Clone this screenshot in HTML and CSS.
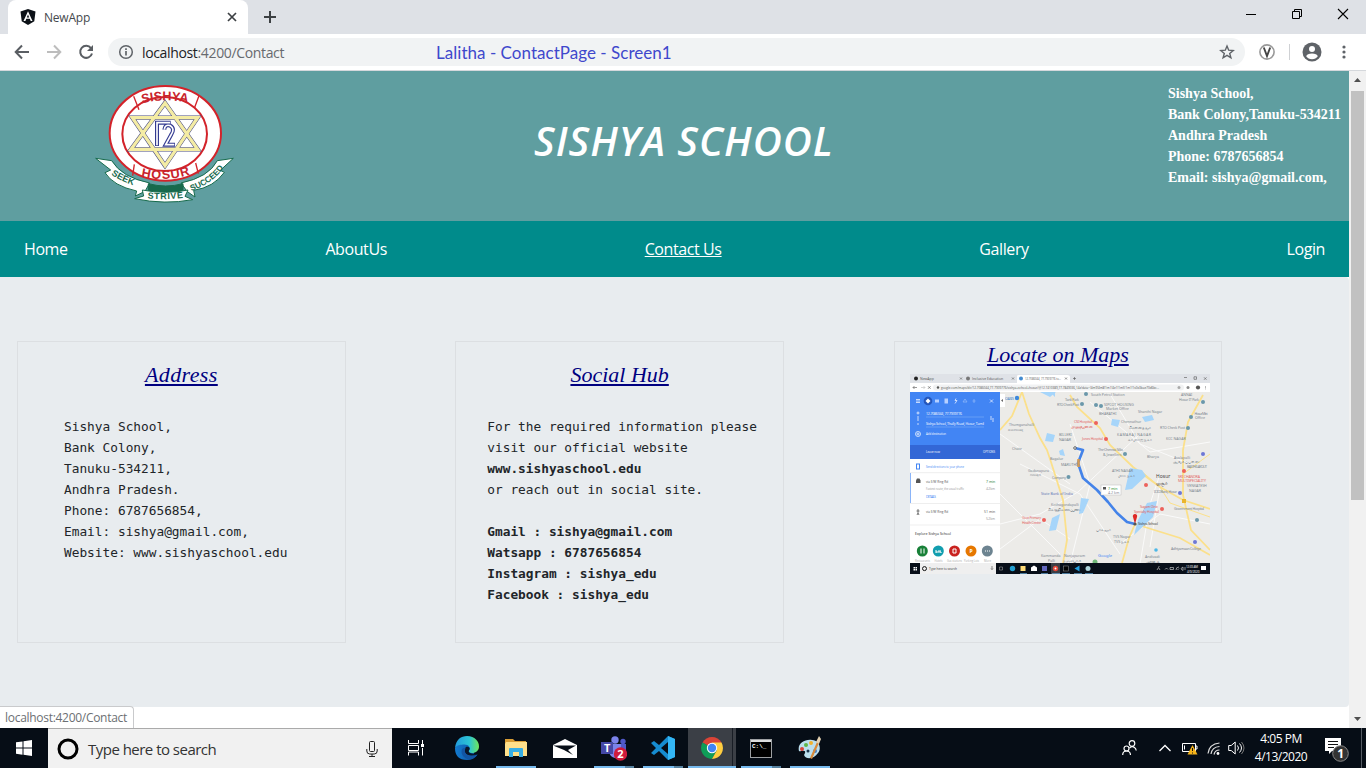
FILE: index.html
```html
<!DOCTYPE html>
<html lang="en">
<head>
<meta charset="utf-8">
<title>NewApp</title>
<link rel="stylesheet" href="styles.css">
</head>
<body>
<div class="screen">
  <div class="tabstrip">
    <div class="tab">
      <svg class="favicon" width="16" height="16" viewBox="0 0 16 16"><path d="M8 0l7.500 2.600-1.200 9.600L8 16l-6.300-3.800L.5 2.600z" fill="#0c1117"/><path d="M8 2.200L3.500 12h1.900l.9-2.200h3.500l.9 2.200h1.800zM8 5.600l1.200 2.800H6.800z" fill="#fff" fill-rule="evenodd"/></svg>
      <span class="tab-title">NewApp</span>
      <svg width="10" height="10" viewBox="0 0 10 10"><path d="M1 1l8 8M9 1L1 9" stroke="#3c4043" stroke-width="1.700"/></svg>
    </div>
    <svg class="plus" width="12" height="12" viewBox="0 0 12 12"><path d="M6 0v12M0 6h12" stroke="#3c4043" stroke-width="2"/></svg>
    <div class="window-buttons">
      <svg width="12" height="12" viewBox="0 0 12 12"><path d="M1 6.500h10" stroke="#000"/></svg>
      <svg width="12" height="12" viewBox="0 0 12 12"><path d="M1.500 3.500h7v7h-7zM3.500 3.500v-2h7v7h-2" fill="none" stroke="#000"/></svg>
      <svg width="12" height="12" viewBox="0 0 12 12"><path d="M1 1l10 10M11 1L1 11" stroke="#000" stroke-width="1.100"/></svg>
    </div>
  </div>
  <div class="toolbar">
    <div class="nav-buttons">
      <svg width="16" height="16" viewBox="0 0 16 16"><path d="M15 8H2M8 1.500L1.700 8 8 14.500" fill="none" stroke="#5a5e63" stroke-width="2"/></svg>
      <svg width="16" height="16" viewBox="0 0 16 16"><path d="M1 8h13M8 1.500L14.300 8 8 14.500" fill="none" stroke="#bdbdbd" stroke-width="2"/></svg>
      <svg width="16" height="16" viewBox="0 0 16 16"><path d="M13 4.200A6 6 0 1 0 14 9.500" fill="none" stroke="#5a5e63" stroke-width="2"/><path d="M15 1v6H9z" fill="#5a5e63"/></svg>
    </div>
    <div class="omnibox">
      <svg width="16" height="16" viewBox="0 0 16 16"><circle cx="8" cy="8" r="6.300" fill="none" stroke="#5f6368" stroke-width="1.500"/><path d="M8 7v4.500M8 4.200v1.700" stroke="#5f6368" stroke-width="1.700"/></svg>
      <span class="url"><span class="host">localhost</span>:4200/Contact</span>
      <span class="note">Lalitha - ContactPage - Screen1</span>
      <svg class="star" width="16" height="16" viewBox="0 0 16 16"><path d="M8 2l1.700 4.200 4.500.3-3.500 2.900 1.200 4.400L8 11.300l-3.900 2.500 1.200-4.400-3.500-2.900 4.500-.3z" fill="none" stroke="#5f6368" stroke-width="1.400"/></svg>
    </div>
    <div class="extensions">
      <svg width="16" height="16" viewBox="0 0 16 16"><circle cx="8" cy="8" r="7.100" fill="#fff" stroke="#999" stroke-width="1.600"/><path d="M4.800 3.500L8 12l3.200-8.500" fill="none" stroke="#444" stroke-width="1.900"/></svg>
      <span class="divider"></span>
      <svg width="20" height="20" viewBox="0 0 20 20"><circle cx="10" cy="10" r="9.500" fill="#5f6368"/><circle cx="10" cy="7" r="3" fill="#fff"/><path d="M4.200 14.200q1-2.700 5.800-2.700t5.800 2.700q-2 3-5.800 3t-5.800-3" fill="#fff"/></svg>
      <svg width="4" height="14" viewBox="0 0 4 14"><g fill="#5f6368"><circle cx="2" cy="2" r="1.600"/><circle cx="2" cy="7" r="1.600"/><circle cx="2" cy="12" r="1.600"/></g></svg>
    </div>
  </div>

  <div class="viewport">
    <div class="page">
      <header class="banner">
        <svg class="crest" width="160" height="135" viewBox="0 0 480 405">
          <defs>
            <path id="arc-top" d="M134 97Q240 56 346 95"/>
            <path id="arc-bottom" d="M134 294Q241 334 352 285"/>
            <path id="arc-left" d="M64 286Q95 316 162 337"/>
            <path id="arc-mid" d="M166 368Q238 378 318 365"/>
            <path id="arc-right" d="M312 350Q384 328 420 272"/>
          </defs>
          <ellipse cx="241" cy="175" rx="167" ry="142" fill="#fff" stroke="#d3232a" stroke-width="6"/>
          <ellipse cx="239" cy="177" rx="127" ry="111" fill="#fff" stroke="#d3232a" stroke-width="6"/>
          <path d="M146 64l16 40M342 62l-14 38M148 268l-5 34M332 264l8 32" stroke="#d3232a" stroke-width="4"/>
          <g fill="none" stroke-linejoin="miter">
            <path d="M240 84L338 223H138zM240 272L142 128H338z" stroke="#44477f" stroke-width="13"/>
            <path d="M240 84L338 223H138zM240 272L142 128H338z" stroke="#f4eca4" stroke-width="10"/>
          </g>
          <path d="M216 213V143H257M238 164q1-17 18-12 15 9 2 28l-16 29h28" fill="none" stroke="#343b91" stroke-width="12"/>
          <path d="M216 211V143H255M238 164q1-17 18-12 15 9 2 28l-16 29h26" fill="none" stroke="#fff" stroke-width="5"/>
          <g class="crest-red" text-anchor="middle">
            <text font-size="38"><textPath href="#arc-top" startOffset="50%">SISHYA</textPath></text>
            <text font-size="38" letter-spacing="3"><textPath href="#arc-bottom" startOffset="50%">HOSUR</textPath></text>
          </g>
          <g fill="#fff" stroke="#176b4c" stroke-width="3">
            <path d="M32 250l48 7q30 50 114 67l-14 25-29 14 4-15q-70-15-95-55l17-8z"/>
            <path d="M445 250l-48 7q-26 50-109 67l18 25 24 17-4-20q60-9 92-54l-12-6z"/>
            <path d="M190 326q52 14 104 0v22q-52 14-104 0z" fill="#17694c"/>
            <path d="M172 345q70 14 137 0l-9 19 23 10q-84 16-174-3l27-8z"/>
          </g>
          <g class="crest-green" font-size="27" text-anchor="middle">
            <text><textPath href="#arc-left" startOffset="50%">SEEK</textPath></text>
            <text letter-spacing="2"><textPath href="#arc-mid" startOffset="50%">STRIVE</textPath></text>
            <text font-size="25"><textPath href="#arc-right" startOffset="50%">SUCCEED</textPath></text>
          </g>
        </svg>
        <h1 class="school-name">SISHYA SCHOOL</h1>
        <address class="contact">Sishya School,<br><span class="bank">Bank Colony,Tanuku-534211</span><br>Andhra Pradesh<br>Phone: 6787656854<br>Email: sishya@gmail.com,</address>
      </header>
      <nav class="menu"><a>Home</a><a>AboutUs</a><a class="current">Contact Us</a><a>Gallery</a><a>Login</a></nav>
      <main class="content">
        <section class="card">
          <h2 class="wide">Address</h2>
          <pre class="address">Sishya School,
Bank Colony,
Tanuku-534211,
Andhra Pradesh.
Phone: 6787656854,
Email: sishya@gmail.com,
Website: www.sishyaschool.edu</pre>
        </section>
        <section class="card">
          <h2>Social Hub</h2>
          <pre class="social">For the required information please
visit our official website
<b>www.sishyaschool.edu</b>
or reach out in social site.

<b>Gmail : sishya@gmail.com
Watsapp : 6787656854
Instagram : sishya_edu
Facebook : sishya_edu</b></pre>
        </section>
        <section class="card card-map">
          <h2>Locate on Maps</h2>
          <svg class="map" width="300" height="200" viewBox="0 0 300 200">
            <rect width="300" height="200" fill="#ecebe8"/>
            <g fill="none" stroke="#fafafa" stroke-width="1">
              <path d="M90 150L130 140 168 118 230 60M90 120l60 60M110 90l60 30 40 60M160 190l20-80-20-60M200 20l30 50 50 20M230 190l10-60 10-30M250 113l-10 60M90 60l70 50M180 28l60 50 60-10M210 170l40-30 50 10M90 175l40-30 30 20"/>
            </g>
            <g fill="none" stroke="#fbe08b" stroke-width="1.800">
              <path d="M112 18l7 22 11 24 7 12 4 12 12 38 4 40-4 23"/>
              <path d="M112 18L102 42 90 56M160 21l7 12 23 21 10 17 23 22 27 20 23 13 27 9"/>
              <path d="M293 21l-15 27-5 28v45l8 35 19 20M225 150l45 14 30 17M225 150l-6 14-7 25"/>
              <path d="M273 100l27-20M230 96l20 17 10 16 40 14" stroke-width="1"/>
            </g>
            <g fill="#a6d5fa">
              <path d="M220 94l12 2 4 6-14 13-7 1zM237 129l10-2-4 16-19 18 4-15zM171 124l8 1-6 14-4 1zM142 144l8-4-4 16-7 1zM137 59l8 2-2 7-8-1zM202 45l8 1-2 7-7-2zM232 43l10-2 2 5-9 2zM149 77l4-2 2 7-5-1zM130 18h16l-6 5zM140 18h5v5z"/>
            </g>
            <path d="M165 74l8 2-5 13 5 15 14 12 11 12 9 11 10 9 8 2" fill="none" stroke="#4483e9" stroke-width="2.600" stroke-linejoin="round"/>
            <path d="M168.500 85l0 8" stroke="#d79b53" stroke-width="2.500"/>
            <circle cx="165" cy="74" r="1.300" fill="#fff" stroke="#444" stroke-width=".8"/>
            <rect x="191" y="111" width="20" height="10" fill="#fff" stroke="#bbb" stroke-width=".5"/>
            <path d="M225 150l-2-7a2.200 2.200 0 1 1 4 0z" fill="#df2725"/><circle cx="225" cy="150" r="1.600" fill="#555"/>
            <g fill="#6b98aa">
              <circle cx="107" cy="24" r="2.200" fill="#3d88dc"/><circle cx="176" cy="20" r="2"/><circle cx="172" cy="30" r="2"/><circle cx="186" cy="31" r="2"/><circle cx="191" cy="32" r="2"/><circle cx="293" cy="28" r="2"/><circle cx="281" cy="43" r="2"/><circle cx="278" cy="54" r="2"/><circle cx="158.500" cy="103" r="2"/><circle cx="215" cy="80" r="2"/><circle cx="287" cy="146" r="2"/>
              <g fill="#6e78d5"><circle cx="293" cy="80" r="2"/><circle cx="270" cy="119" r="2"/><circle cx="285" cy="168" r="2"/></g>
              <g fill="#ed625c"><circle cx="186" cy="49" r="2"/><circle cx="196" cy="65" r="2"/><circle cx="134" cy="146" r="2"/><circle cx="236" cy="111" r="2"/><circle cx="252" cy="135" r="2"/><circle cx="274" cy="97" r="2"/></g>
              <circle cx="246" cy="176" r="1.800" fill="#4db8e8"/><circle cx="185" cy="188" r="2.500" fill="#6fb778"/><rect x="272" y="125" width="4" height="4" fill="#eab52d"/>
            </g>
            <g class="map-labels">
              <text x="95" y="26" fill="#3f83c7" textLength="9">OASIS</text>
              <text x="155" y="27" textLength="14">Tank Park</text><text x="147" y="32" textLength="22">RTO Check Post</text><text x="181" y="22">South Petrol Station</text><text x="194" y="32">SIPCOT HOUSING</text><text x="196" y="36">Market Office</text><text x="189" y="40.500">BHARATHI</text><text x="228" y="39">Shanthi Nagar</text><text x="211" y="49">Chennathur</text><text x="219" y="54.500">சென்னத்தூர்</text><text x="207" y="61.500" textLength="34">KAMARAJ NAGAR</text><text x="218" y="67">காமராஜ் நகர்</text>
              <text x="271" y="22">ANNAI</text><text x="269" y="26.500" textLength="20">Hosur IT Park</text><text x="284.500" y="40.500" textLength="13">Hosur Mini</text><text x="285" y="45">Office</text><text x="250" y="55" textLength="25">RTO Check Post</text><text x="256" y="66">KCC NAGAR</text><text x="264" y="84.500">Avalapalli</text><text x="263" y="89">ஆவலப்பள்ளி</text><text x="277" y="94" textLength="20">BASTHI LAYOUT</text><text x="188" y="77" textLength="25">The Chennai Silks</text><text x="193" y="82">&amp; Jewellers</text><text x="237" y="84">Bharya</text><text x="202" y="98">ATHI NAGAR</text><text x="208" y="103">மாரி நகர்</text>
              <text x="99" y="52">Thumganahalli</text><text x="98" y="57">ತುಮಗಾನಹಳ್ಳಿ</text><text x="102" y="76">Chate</text><text x="149" y="62">BILLERI</text><text x="149" y="67">NAGAR</text><text x="118" y="98">Gadanapura</text><text x="120" y="102">ಗದನಪುರ</text><text x="142" y="105" textLength="14">Company</text><text x="131" y="121" fill="#6478b5">State Bank of India</text><text x="141" y="132">Kothagondapalli</text><text x="137" y="137" textLength="32">கொத்தகொண்டப்பள்ளி</text><text x="151" y="92">MARUTHI</text><text x="140" y="86">Bagalur</text><text x="131" y="183">Kammanda</text><text x="138" y="188">Palli</text><text x="154" y="183">Nanjapuram</text><text x="153" y="188" textLength="18">நஞ்சாபுரம்</text>
              <text x="186" y="157">பாகலூர்</text><text x="203" y="163.500">TVS Nagar</text><text x="204" y="168.500">TVS நகர்</text><text x="244" y="119" textLength="23">ICICI Bank, Hosur</text><text x="277" y="113">VENKATESH</text><text x="279" y="118">NAGAR</text><text x="264" y="136" textLength="30">Government Hospital</text><text x="261" y="176" textLength="30">Adhiyamaan College</text><text x="235" y="183.500">Andivadi</text><text x="236" y="188.500" textLength="14">ஆண்டிவாடி</text>
              <g fill="#e26767"><text x="164" y="48.500" textLength="18">CSI Hospital</text><text x="161" y="53.500" textLength="22">மருத்துவமனை</text><text x="172" y="66" textLength="21">Jones Hospital</text><text x="112" y="145" textLength="19">Govt Primary</text><text x="112" y="150" textLength="19">Health Centre</text><text x="230" y="133.500" textLength="18">Sugam Clinic</text><text x="224" y="138.500" textLength="25">Specialty Hospital</text><text x="268" y="103.500" textLength="22">SRI CHANDRA</text><text x="268" y="108" textLength="28">MULTISPECIALITY</text></g>
              <g fill="#444"><text class="town" x="246" y="104">Hosur</text><text class="town" x="246" y="111">ஓசூர்</text><text x="228" y="151" textLength="20">Sishya School</text></g>
              <text x="198" y="115.500" fill="#259331">7 min</text><text x="198" y="120">4.2 km</text>
              <text x="188" y="183" fill="#4385f4" font-size="4.200">Google</text>
            </g>
            <path d="M193 113h3v2.500h-3z" fill="#555"/>
            <path d="M0 0H300V9H0z" fill="#dfe2e7"/><path d="M107 2q0-1 2-1h48q3 0 3 2v6h-53z" fill="#fff"/>
            <path d="M0 9H300V18H0z" fill="#fff"/><rect x="23" y="10.500" width="251" height="6" rx="3" fill="#f1f2f3"/>
            <g class="mini" fill="#555">
              <circle cx="6" cy="4.500" r="2" fill="#222"/><text x="10" y="6">NewApp</text><circle cx="58" cy="4.500" r="2" fill="#777"/><text x="62" y="6">Inclusive Education</text><circle cx="111" cy="4.500" r="2" fill="#438bd0"/><text x="115" y="6" textLength="36" lengthAdjust="spacingAndGlyphs">12.7086044, 77.7909776 to...</text>
              <circle cx="28" cy="13.500" r="1.200"/><text x="31" y="15" textLength="218" lengthAdjust="spacingAndGlyphs">google.com/maps/dir/12.7086044,77.7909776/sishya+school+hosur/@12.7410389,77.7849036,14z/data=!4m9!4m8!1m1!4e1!1m5!1m1!1s0x3bae70d6bc...</text><circle cx="269" cy="13.500" r="1.500" fill="#aaa"/><circle cx="278" cy="13.500" r="1.500" fill="#888"/><circle cx="288" cy="13.500" r="2.100"/>
            </g>
            <g fill="none" stroke="#555" stroke-width=".6"><path d="M50 3.500l2 2m0-2l-2 2M102 3.500l2 2m0-2l-2 2M155 3.500l2 2m0-2l-2 2M163 4.500h3m-1.500-1.500v3M274 3.500h3M284 2.800h2.500v2.500H284zM294 3.300l2.500 2.500m0-2.500L294 5.800M3 13.500h4M4.500 12L3 13.500 4.500 15M18 12.200l2.600 2.600m0-2.600L18 14.800M295.500 12v.7m0 .6v.7m0 .6v.7"/><path d="M11 13.500h4M13.500 12l1.500 1.500-1.500 1.500" stroke="#bbb"/></g>
            <path d="M0 18H90V71H0z" fill="#4285f4"/><path d="M0 71H90V85H0z" fill="#3367d6"/><path d="M0 85H90V189H0z" fill="#fff"/>
            <path d="M90 20h5v13h-5z" fill="#fff"/><path d="M93 25l-2 1.500 2 1.500z" fill="#666"/>
            <circle cx="18" cy="27" r="4.300" fill="#2456bb"/><path d="M18 24.500l2.500 2.500-2.500 2.500-2.500-2.500z" fill="#fff"/>
            <g fill="none" stroke="#e7efff" stroke-width=".8"><path d="M6 25.500h4M6 27h4M6 28.500h4M80 25.500l3 3m0-3l-3 3M46 24.500l-1 2h2l-2 3"/><path d="M55 25l-2 3h4zM64 25v4m-1.500-2h3" stroke="#8bb4fa"/></g>
            <g fill="#b6d0ff"><rect x="25" y="25.500" width="4" height="3"/><rect x="34.500" y="24.500" width="3.500" height="5"/></g>
            <g fill="none" stroke="#fff" stroke-width=".7"><circle cx="8" cy="39" r="1"/><path d="M8 42v5M8 49v2"/><path d="M16 43h58M16 53h58" stroke="#8bb4fa" stroke-width=".5"/><circle cx="8" cy="60" r="2.500"/><path d="M6.500 60h3M8 58.500v3M81 42v4m2-2v4"/></g>
            <g class="mini" fill="#fff"><text x="16" y="40.500" textLength="36">12.7086044, 77.7909776</text><text x="16" y="51" textLength="58">Sishya School, Thally Road, Hosur, Tamil</text><text x="16" y="61" textLength="20" lengthAdjust="spacingAndGlyphs">Add destination</text><text x="16" y="79" textLength="14" lengthAdjust="spacingAndGlyphs">Leave now</text><text x="73" y="79" textLength="12" lengthAdjust="spacingAndGlyphs">OPTIONS</text></g>
            <path d="M0 98.700h90M0 129.500h90M0 151h90" stroke="#ddd" stroke-width=".5"/><path d="M.5 99v30" stroke="#8ab4f8"/>
            <g class="mini" fill="#555"><text x="16" y="94" fill="#4285f4" textLength="38" lengthAdjust="spacingAndGlyphs">Send directions to your phone</text><text x="16" y="109" textLength="22" lengthAdjust="spacingAndGlyphs">via E/W Ring Rd</text><text x="76" y="109" fill="#188038">7 min</text><text x="16" y="115.500" textLength="38" lengthAdjust="spacingAndGlyphs" fill="#999">Fastest route, the usual traffic</text><text x="76" y="115.500" fill="#999" textLength="9">4.2 km</text><text x="16" y="123.500" fill="#4285f4" textLength="10">DETAILS</text><text x="16" y="139" textLength="22" lengthAdjust="spacingAndGlyphs">via E/W Ring Rd</text><text x="74" y="139">51 min</text><text x="76" y="145.500" fill="#999" textLength="9">5.2 km</text><text x="5" y="160.500" textLength="36" fill="#222">Explore Sishya School</text></g>
            <path d="M6 109v-2.500l1-2h2.500l1 2v2.500z" fill="#555"/><path d="M8 135v4m-1 2l1-2 1 2M6.500 137h3" stroke="#555" stroke-width=".8" fill="none"/><rect x="6.500" y="90" width="3" height="5" fill="none" stroke="#4285f4"/>
            <g><circle cx="12.300" cy="177" r="5.500" fill="#188038"/><circle cx="28.300" cy="177" r="5.500" fill="#129eaf"/><circle cx="44.500" cy="177" r="5.500" fill="#c9221f"/><circle cx="61" cy="177" r="5.500" fill="#e67700"/><circle cx="77.300" cy="177" r="5.500" fill="#6d8491"/></g>
            <path d="M11 174.500v5M14 174.500v5M26 176v3m0-1h5v1m-3-2h3M43 175h3v4h-3z" fill="none" stroke="#fff" stroke-width="1"/>
            <path d="M75 177h1m1 0h1m1 0h1" stroke="#fff"/>
            <g class="mini" fill="#fff"><text x="59.600" y="179" class="parking">P</text></g>
            <g class="mini" fill="#aaa"><text x="5" y="188" textLength="15" lengthAdjust="spacingAndGlyphs">Restaurants</text><text x="24.500" y="188" textLength="8" lengthAdjust="spacingAndGlyphs">Hotels</text><text x="37" y="188" textLength="15" lengthAdjust="spacingAndGlyphs">Gas stations</text><text x="54" y="188" textLength="15" lengthAdjust="spacingAndGlyphs">Parking Lots</text><text x="74" y="188" textLength="7" lengthAdjust="spacingAndGlyphs">More</text></g>
            <path d="M0 189H300V200H0z" fill="#080f19"/><path d="M10 189h76v11H10z" fill="#efefef"/><path d="M3.500 193h1.500v1.500H3.500zM5.500 193H7v1.500H5.500zM3.500 195H5v1.500H3.500zM5.500 195H7v1.500H5.500z" fill="#fff"/><circle cx="14.500" cy="194.600" r="2" fill="none" stroke="#111"/>
            <g class="mini" fill="#333"><text x="19" y="196" textLength="28" lengthAdjust="spacingAndGlyphs">Type here to search</text></g><path d="M82 192v3m-1-.5q1 2.500 2 0" stroke="#444" stroke-width=".6" fill="none"/>
            <path d="M89.500 193h3v3h-3z" fill="none" stroke="#999" stroke-width=".6"/><circle cx="102.500" cy="194.500" r="2.700" fill="#239fd1"/><rect x="110.500" y="192" width="5" height="5" fill="#ffdc78"/><path d="M121 193.500l3-2 3 2v3.500h-6z" fill="#fff"/><rect x="132" y="192" width="5" height="5" fill="#6267bd"/><path d="M141 189h9v11h-9z" fill="#3b3f46"/><circle cx="145.500" cy="194.500" r="2.700" fill="#e14739"/><circle cx="145.500" cy="194.500" r="1" fill="#fff"/><rect x="153.500" y="192" width="5" height="5" fill="#030303" stroke="#999" stroke-width=".5"/><path d="M164.500 194.500l5-3v6z" fill="#229ddd"/><circle cx="178" cy="194.500" r="2.500" fill="#aed6dc"/>
            <path d="M110 199.700h7M131 199.700h7M142 199.700h8M152 199.700h8M164 199.700h8M175 199.700h8" stroke="#72b5e6" stroke-width=".8"/>
            <path d="M247 196l1.500-2.500 1.500 2.500M248.500 192.500h1M255 195.500l1.500-1.500 1.500 1.500M260 193.500h3.500v2H260zM266 196q0-3 3-3m-1.500 3l1.500-1.500M271 194.500l2-1.500v3.500l-2-1.500zM275 193v3" fill="none" stroke="#ddd" stroke-width=".6"/>
            <g class="mini" fill="#fff"><text x="276" y="194" textLength="12" class="mini-clock">12:33 AM</text><text x="277" y="198.500" class="mini-clock">4/9/2020</text></g><rect x="291" y="192" width="5" height="4" fill="#fff"/>
          </svg>
        </section>
      </main>
    </div>
    <div class="scrollbar">
      <svg width="17" height="17" viewBox="0 0 17 17"><path d="M5 11l3.500-4 3.500 4z" fill="#505050"/></svg>
      <div class="thumb"></div>
      <svg width="17" height="17" viewBox="0 0 17 17"><path d="M5 6h7L8.500 10z" fill="#505050"/></svg>
    </div>
    <div class="status">localhost:4200/Contact</div>
  </div>

  <div class="taskbar">
    <div class="start"><svg width="16" height="16" viewBox="0 0 16 16"><path d="M0 2.300l6.500-.9v6.200H0zM7.500 1.200L16 0v7.600H7.500zM0 8.500h6.500v6.200L0 13.800zM7.500 8.500H16V16l-8.500-1.200z" fill="#fff"/></svg></div>
    <div class="search">
      <svg width="22" height="22" viewBox="0 0 22 22"><circle cx="11" cy="11" r="9" fill="none" stroke="#000" stroke-width="3"/></svg>
      <span class="search-text">Type here to search</span>
      <svg width="12" height="16" viewBox="0 0 12 16"><rect x="3.500" y=".5" width="5" height="10" rx="1" fill="none" stroke="#222"/><path d="M.8 8v2q0 3 3 3h4.400q3 0 3-3V8M6 13v2.500M3 15.500h6" fill="none" stroke="#222"/></svg>
    </div>
    <div class="apps">
      <div class="app taskview"><svg width="16" height="16" viewBox="0 0 16 16"><path d="M.5 0v3.500h10V0M.5 15.500V12h10v3.500M.5 5.500h10v5H.5zM14.500 0v4M14.500 8v7.500" fill="none" stroke="#fff"/><path d="M13 4h3v3h-3z" fill="#fff"/></svg></div>
      <div class="app"><svg width="24" height="24" viewBox="0 0 24 24"><defs><linearGradient id="edge-top"><stop stop-color="#229bdd"/><stop offset=".6" stop-color="#2cc5d5"/><stop offset="1" stop-color="#70e65a"/></linearGradient><linearGradient id="edge-low"><stop stop-color="#137bd0"/><stop offset="1" stop-color="#0d4f9d"/></linearGradient></defs><path d="M0 12q0 12 12 12 7 0 10.500-5.500-1 .5-3 .9L16 8 4 6z" fill="url(#edge-low)"/><path d="M0 12C1 3.500 6 0 12 0c8 0 12 5.500 12 10.500 0 4-3 6.500-7 6.500-3 0-4-1-3-2.500 2-3-.5-6-4.500-6C5.500 8.500 2 9 0 12z" fill="url(#edge-top)"/><path d="M11 11c-3 3-1 8 4 8.500 3 .3 5.500-.4 7.500-1.500-2 .3-8 0-8.800-2.500 0-1.500 1-1.500 1-3 0-1.500-2-2.300-3.700-1.500z" fill="#09172b"/><path d="M7 13c-2 6 3 11 9 10 4-1 6-3.500 6.500-4.500-3.500 1.500-7 2-10 .5-3-1.500-3-4-2-7-2 0-3 .5-3.500 1z" fill="#1255a4"/></svg></div>
      <div class="app running"><svg width="22" height="20" viewBox="0 0 22 20"><path d="M0 1h8l2 2h11v15H0z" fill="#d99d35"/><path d="M1 4h21v14H0V6z" fill="#ffe08a"/><path d="M4 19v-8q0-1 1-1h12q1 0 1 1v8h-4v-5H8v5z" fill="#37aee4"/></svg></div>
      <div class="app"><svg width="24" height="19" viewBox="0 0 24 19"><path d="M0 6L12 0l12 6v13H0z" fill="#fff"/><path d="M0 6.500h23L15 11l5 5-9-5z" fill="#080f18"/></svg></div>
      <div class="app running multi teams"><svg width="26" height="25" viewBox="0 0 26 25"><circle cx="14" cy="4" r="3.700" fill="#7b83eb"/><circle cx="22" cy="5.500" r="2.700" fill="#5059c9"/><path d="M12 8h13v8q-1 4-5 4h-8z" fill="#5059c9"/><path d="M8 8h12v8q-1 6-6 6-5-1-6-6z" fill="#7b83eb"/><rect y="6" width="12" height="12" fill="#4448a7"/><text x="3" y="16" class="t-letter">T</text><circle cx="19.500" cy="18" r="6.700" fill="#cf1b3c"/><text x="16.300" y="22" class="badge">2</text></svg></div>
      <div class="app running multi"><svg width="24" height="24" viewBox="0 0 24 24"><path d="M17 0l7 3v18l-7 3-9-9-5 4-3-2 5-5-5-5 3-2 5 4zM17 6l-7 6 7 6z" fill="#168cd0" fill-rule="evenodd"/><path d="M17 0l7 3v18l-7 3z" fill="#33b6f5"/></svg></div>
      <div class="app running active"><svg width="22" height="22" viewBox="0 0 22 22"><path d="M11 11L1.500 5.500A11 11 0 0 1 20.500 5.500z" fill="#db4437"/><path d="M1.500 5.500A11 11 0 0 0 11 22l5-9-5-2z" fill="#0f9d58"/><path d="M11 22A11 11 0 0 0 20.500 5.500H11l5 7.500z" fill="#ffcd40"/><circle cx="11" cy="11" r="5.200" fill="#fff"/><circle cx="11" cy="11" r="4.200" fill="#4285f4"/></svg></div>
      <div class="app running multi"><svg width="22" height="19" viewBox="0 0 22 19"><rect x=".5" y=".5" width="21" height="18" fill="#000" stroke="#9da0a3"/><path d="M1 2h20" stroke="#ddd" stroke-width="2"/><text x="2" y="9" class="prompt">C:\_</text></svg></div>
      <div class="app running"><svg width="24" height="24" viewBox="0 0 24 24"><path d="M1 15C-1 8 6 3 14 4c7 0 10 8 6 13-4 6-12 7-14 2 1-2 2-4 0-4-2-1-4 1-5 0z" fill="#bbdfed"/><circle cx="4" cy="13" r="2" fill="#db443a"/><circle cx="8" cy="9" r="2" fill="#5fb646"/><circle cx="13" cy="7" r="2" fill="#f0b22e"/><circle cx="10" cy="15" r="1.500" fill="#17324a"/><circle cx="17" cy="15" r="2" fill="#417dc6"/><path d="M19 6L12 22l2 1 7-16z" fill="#d78a3a"/><path d="M18 6l3-6 2 3-2 5z" fill="#e5d2b2"/></svg></div>
    </div>
    <div class="tray">
      <svg class="people" width="15" height="16" viewBox="0 0 15 16"><g fill="none" stroke="#fff" stroke-width="1.200"><circle cx="10" cy="3.500" r="2.800"/><circle cx="4.500" cy="8.500" r="2.500"/><path d="M.7 15q0-4 3.800-4T8.500 15M7.500 8q2.500-2.500 5-.5 1.500 1 1.700 3"/></g></svg>
      <svg class="caret" width="12" height="8" viewBox="0 0 12 8"><path d="M.5 7L6 1.500 11.500 7" fill="none" stroke="#fff" stroke-width="1.300"/></svg>
      <svg class="battery" width="16" height="14" viewBox="0 0 16 14"><path d="M.5 2.500h13v8H.5zM14 5h1v3h-1" fill="none" stroke="#fff"/><path d="M2.500 4.500v4" stroke="#fff"/><path d="M10.500 4l5 9.500h-10z" fill="#f5b31a"/><path d="M10.500 7v3M10.500 11.500v1" stroke="#111"/></svg>
      <svg class="wifi" width="13" height="13" viewBox="0 0 13 13"><g fill="none" stroke="#ddd" stroke-width="1.200"><path d="M1 11.500Q2 2 12.500 1M4 12Q5 5 12.500 4.500M7 12.500Q8 8 12.500 8"/></g><circle cx="11" cy="11.500" r="1.400" fill="#fff"/></svg>
      <svg class="sound" width="17" height="14" viewBox="0 0 17 14"><path d="M.7 4.500h2.500l4-3.500v12l-4-3.500H.7zM9.500 4.500q2 2.500 0 5M11.500 2.500q4 4.500 0 9" fill="none" stroke="#fff"/><path d="M13.500 1q5 6 0 12" fill="none" stroke="#777"/></svg>
      <div class="clock"><span>4:05 PM</span><span class="date">4/13/2020</span></div>
      <svg class="notice" width="26" height="24" viewBox="0 0 26 24"><path d="M1 0h16v13H8l-3 3v-3H1z" fill="#fff"/><path d="M4 3.500h10M4 6.500h10M4 9.500h6" stroke="#111"/><circle cx="16.500" cy="15.500" r="7.800" fill="#333" stroke="#888"/><text x="13.200" y="20" class="notice-count">1</text></svg>
    </div>
  </div>
</div>
</body>
</html>
```
FILE: styles.css
```css
* { box-sizing: border-box; }
body { margin: 0; font-family: "Open Sans", "Noto Sans", sans-serif; overflow: hidden; }
svg { display: block; flex: none; }
.screen { width: 1366px; height: 768px; display: flex; flex-direction: column; background: #fff; overflow: hidden; }

/* Browser frame */
.tabstrip { height: 34px; background: #dee1e6; display: flex; align-items: center; padding-left: 8px; }
.tab { width: 240px; height: 34px; background: #fff; border-radius: 8px 8px 0 0; display: flex; align-items: center; padding: 0 11px 0 12px; }
.tab-title { flex: 1; margin-left: 8px; font-size: 12px; letter-spacing: -.2px; color: #45494d; }
.plus { margin-left: 16px; }
.window-buttons { display: flex; gap: 34px; margin-left: auto; padding: 0 17px 6px 0; }
.toolbar { height: 37px; display: flex; align-items: center; padding: 0 20px 0 14px; border-bottom: 1px solid #d5d8dc; }
.nav-buttons { display: flex; gap: 16px; width: 94px; }
.omnibox { width: 1137px; height: 28px; border-radius: 14px; background: #f1f3f4; display: flex; align-items: center; padding: 0 10px; }
.url { margin-left: 8px; width: 294px; font-size: 14px; letter-spacing: -.35px; color: #676a6f; white-space: nowrap; }
.host { color: #202124; }
.note { font-family: Lato, sans-serif; font-size: 17px; color: #3f48cc; white-space: nowrap; letter-spacing: .03px; }
.star { margin-left: auto; }
.extensions { flex: 1; display: flex; align-items: center; padding-left: 14px; }
.divider { width: 1px; height: 16px; background: #cfd1d4; margin: 0 12px 0 14px; }
.extensions svg:last-child { margin-left: auto; }

/* Page */
.viewport { height: 657px; display: flex; position: relative; background: #fff; }
.page { width: 1349px; }
.banner { height: 150px; background: #5f9ea0; display: grid; grid-template-columns: 534px 1fr 181px; align-items: start; }
.crest { margin: 4px 0 0 85px; }
.crest-red, .crest-green { font-family: "Liberation Sans", sans-serif; font-weight: bold; }
.crest-red { fill: #c8232b; }
.crest-green { fill: #17694c; }
.school-name { margin: 43px 0 0; font-size: 40px; line-height: 54px; font-style: italic; font-weight: 600; letter-spacing: 1px; color: #fff; white-space: nowrap; }
.contact { margin-top: 12px; font: bold 14px/21px "Liberation Serif", serif; color: #fff; white-space: nowrap; }
.menu { height: 56px; background: #008b8b; display: flex; align-items: center; justify-content: space-between; padding: 0 24px; font-size: 16px; letter-spacing: -.4px; color: #fff; }
.current { text-decoration: underline; }
.content { height: 430px; padding: 64px 17px 0; background: #e8ecef; border-radius: 0 4px 4px 0; display: grid; grid-template-columns: repeat(3, 328.700px); column-gap: 109.600px; }
.card { height: 302px; border: 1px solid #dcdfe2; padding-top: 20px; }
.card-map { padding-top: 0; }
.card h2 { margin: 0; height: 26px; font: italic 22px/26px "Liberation Serif", serif; letter-spacing: 0; text-align: center; text-decoration: underline; color: #000080; }
.card h2.wide { letter-spacing: .4px; }
.card pre { margin: 28px 0 0; font: 12.800px/21px "DejaVu Sans Mono", monospace; color: #212529; }
.card .address { padding-left: 46px; }
.card .social { padding-left: 31px; }
.map { margin: 6px auto 0 15px; }
.map-labels { font-family: "Noto Sans", sans-serif; font-size: 3.600px; fill: #7d8790; }
.map-labels .town { font-size: 5px; }
.mini { font-family: "Open Sans", sans-serif; font-size: 3.500px; }
.mini-clock { font-size: 3px; }
.parking { font-size: 5px; font-weight: bold; }
.scrollbar { width: 17px; display: flex; flex-direction: column; background: #f1f1f1; }
.scrollbar svg:last-child { margin-top: auto; }
.thumb { width: 13px; height: 409px; margin: 3px 2px 0; background: #c1c1c1; }
.status { position: absolute; left: 0; bottom: 0; width: 134px; height: 22px; padding-left: 5px; background: #fff; border: solid #c9cacc; border-width: 1px 1px 0 0; border-radius: 0 4px 0 0; font-size: 12px; line-height: 21px; letter-spacing: -.29px; color: #6c6f73; white-space: nowrap; }

/* Taskbar */
.taskbar { height: 40px; display: flex; background: #060d16; color: #fff; }
.start { width: 48px; display: grid; place-items: center; }
.search { width: 344px; background: #f1f1f1; display: flex; align-items: center; padding: 0 14px 0 9px; border-top: 1px solid #aaa; }
.search-text { flex: 1; margin-left: 9px; font-size: 15px; letter-spacing: -.52px; color: #333; }
.apps { display: flex; }
.app { width: 49px; height: 40px; display: grid; place-items: center; }
.taskview { width: 50px; padding-right: 2px; }
.running { background: linear-gradient(#76b9ed, #76b9ed) 5px 38px / 40px 2px no-repeat; }
.multi { background: linear-gradient(90deg, #76b9ed 31px, #56819f 31px) 5px 38px / 40px 2px no-repeat; }
.active { background: linear-gradient(#76b9ed, #76b9ed) 1px 38px / 48px 2px no-repeat, linear-gradient(90deg, #3b3f46 44px, #181d25 44px, #181d25 45px, #3b3f46 45px) 1px 0 / 48px 38px no-repeat; }
.t-letter { font: bold 11px "Open Sans", sans-serif; fill: #fff; }
.badge { font: bold 11px "Open Sans", sans-serif; fill: #fff; }
.prompt { font: bold 6px "Liberation Mono", monospace; fill: #fff; }
.tray { flex: 1; display: flex; align-items: center; padding-left: 288px; position: relative; }
.caret { margin-left: 22px; }
.battery { margin-left: 11px; }
.wifi { margin-left: 9px; }
.sound { margin-left: 8px; }
.clock { width: 56px; margin-left: 8px; display: flex; flex-direction: column; align-items: center; font-size: 12px; line-height: 18px; letter-spacing: -.5px; white-space: nowrap; }
.notice { margin: 3px 0 0 15px; }
.tray::after { content: ""; width: 1px; height: 40px; margin-left: auto; margin-right: 4px; background: #555b63; }
.notice-count { font: bold 12px "Open Sans", sans-serif; fill: #fff; }
```
